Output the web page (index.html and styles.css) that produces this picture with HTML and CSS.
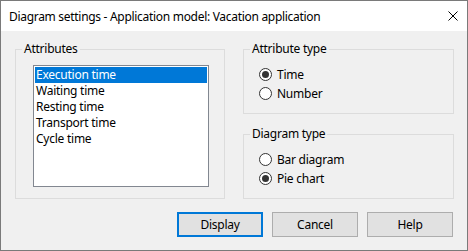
FILE: index.html
```html
<!DOCTYPE html>
<html lang="en">
<head>
  <meta charset="UTF-8" />
  <title>Diagram settings</title>
  <link rel="stylesheet" href="styles.css">
</head>
<body>
  <div class="window">
    <div class="titlebar">
      <span class="title">Diagram settings - Application model: Vacation application</span>
      <svg class="close" width="10" height="10" viewBox="0 0 10 10">
        <path d="M0.5 0.5 L9.5 9.5 M9.5 0.5 L0.5 9.5" stroke="#000" stroke-width="1" fill="none"/>
      </svg>
    </div>

    <div class="content">
      <div class="columns">
        <div class="group attributes">
          <div class="group-title">Attributes</div>
          <ul class="listbox">
            <li class="selected">Execution time</li>
            <li>Waiting time</li>
            <li>Resting time</li>
            <li>Transport time</li>
            <li>Cycle time</li>
          </ul>
        </div>

        <div class="right-col">
          <div class="group small">
            <div class="group-title">Attribute type</div>
            <div class="radios">
              <label class="radio"><span class="dot checked"></span>Time</label>
              <label class="radio"><span class="dot"></span>Number</label>
            </div>
          </div>
          <div class="group small">
            <div class="group-title">Diagram type</div>
            <div class="radios">
              <label class="radio"><span class="dot"></span>Bar diagram</label>
              <label class="radio"><span class="dot checked"></span>Pie chart</label>
            </div>
          </div>
        </div>
      </div>

      <div class="buttons">
        <button class="default">Display</button>
        <button>Cancel</button>
        <button>Help</button>
      </div>
    </div>
  </div>
</body>
</html>
```

FILE: styles.css
```css
 body {
   margin: 0;
   font-family: 'Noto Sans', sans-serif;
   font-size: 12px;
   letter-spacing: -0.25px;
   color: #000;
 }
 .window {
   width: 468px;
   height: 251px;
   box-sizing: border-box;
   border: 1px solid #7a7a7a;
   background: #f0f0f0;
 }
 .titlebar {
   height: 30px;
   background: #fff;
   display: flex;
   align-items: center;
   padding-left: 8px;
   padding-right: 9px;
 }
 .title {
   flex: 1;
   letter-spacing: -0.3px;
 }
 .close {
   display: block;
 }
 .content {
   padding: 18px 13px 0 14px;
 }
 .columns {
   display: flex;
   gap: 18px;
 }
 .group {
   border: 1px solid #dcdcdc;
   box-sizing: border-box;
 }
 .group-title {
   display: table;
   margin: -9px 0 0 6px;
   padding: 0 2px;
   line-height: 16px;
   background: #f0f0f0;
 }
 .attributes {
   width: 210px;
   height: 150px;
 }
 .listbox {
   list-style: none;
   margin: 8px 0 0 17px;
   padding: 1px;
   width: 176px;
   height: 122px;
   box-sizing: border-box;
   border: 1px solid #828790;
   background: #fff;
 }
 .listbox li {
   height: 16px;
   line-height: 16px;
   padding-left: 1px;
 }
 .listbox li.selected {
   background: #0078d7;
   color: #fff;
 }
 .right-col {
   width: 211px;
   display: flex;
   flex-direction: column;
   gap: 20px;
 }
 .small {
   height: 65px;
 }
 .radios {
   display: flex;
   flex-direction: column;
   padding: 8px 0 0 15px;
 }
 .radio {
   display: flex;
   align-items: center;
   height: 19px;
   gap: 5px;
 }
 .dot {
   width: 13px;
   height: 13px;
   box-sizing: border-box;
   border: 1px solid #333;
   border-radius: 50%;
   background: #fff;
   display: grid;
   place-items: center;
 }
 .dot.checked::after {
   content: "";
   width: 7px;
   height: 7px;
   border-radius: 50%;
   background: #333;
 }
 .buttons {
   display: flex;
   justify-content: flex-end;
   gap: 9px;
   margin-top: 13px;
   padding-right: 1px;
 }
 .buttons button {
   width: 86px;
   height: 25px;
   font-family: inherit;
   font-size: 12px;
   letter-spacing: inherit;
   color: #000;
   background: #e1e1e1;
   border: 1px solid #adadad;
   padding: 0;
 }
 .buttons button.default {
   border: 2px solid #0078d7;
 }
```
